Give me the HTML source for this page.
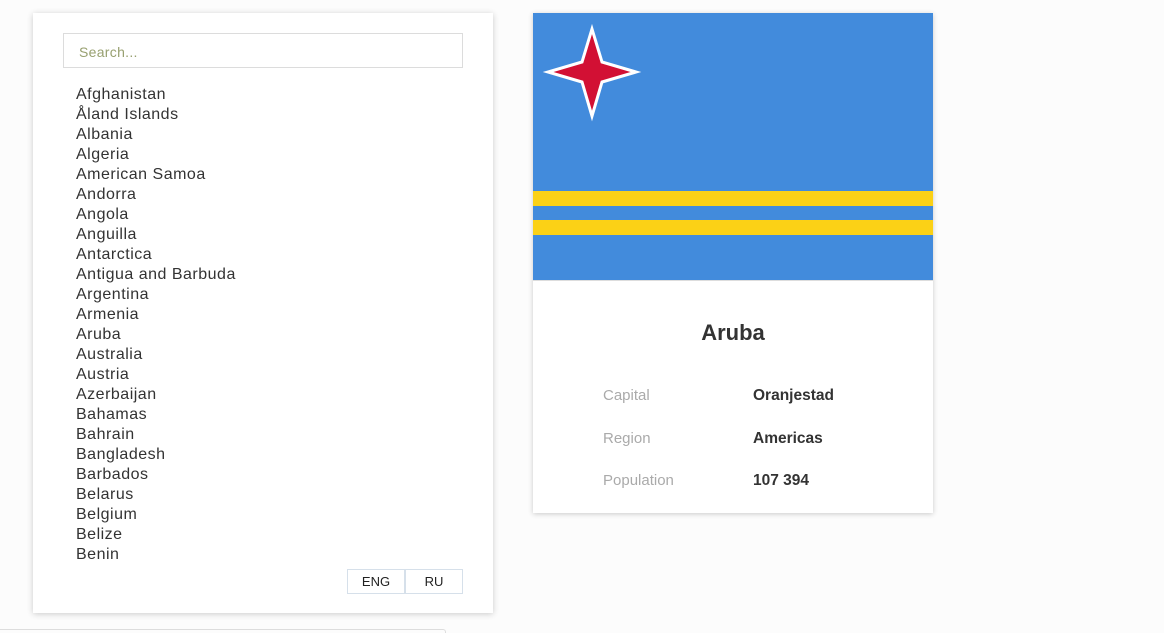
<!DOCTYPE html><html><head><style>
body{margin:0;background:#fcfcfc;font-family:"Liberation Sans",sans-serif;width:1164px;height:633px;overflow:hidden;position:relative}
.l{position:absolute;left:33px;top:13px;width:460px;height:600px;background:#fff;box-shadow:0 1px 6px rgba(0,0,0,.2)}
.s{position:absolute;left:30px;top:20px;width:400px;height:35px;border:1px solid #dcdcdc;box-sizing:border-box;font-size:14px;color:#98a070;padding:10px 15px;letter-spacing:.3px}
ul{list-style:none;margin:0;padding:0;position:absolute;left:43px;top:72px;font-size:16px;line-height:20px;color:#333;letter-spacing:.5px}
.b{position:absolute;top:556px;height:25px;border:1px solid #d6e0ea;box-sizing:border-box;font-size:13px;text-align:center;line-height:23px;color:#222}
.r{position:absolute;left:533px;top:13px;width:400px;height:500px;background:#fff;box-shadow:0 1px 5px rgba(0,0,0,.2)}
.f{position:absolute;left:0;top:0;width:400px;height:267px;background:#428bdc;border-bottom:1px solid #ddd}
.st{position:absolute;left:0;width:400px;height:15px;background:#fbd116}
h2{position:absolute;top:306px;width:400px;text-align:center;margin:0;font-size:22px;color:#333}
.k{position:absolute;left:70px;font-size:15px;color:#aaa}.v{position:absolute;left:220px;font-size:15.5px;color:#333;font-weight:bold}
</style></head><body>
<div class="l"><div class="s">Search...</div>
<ul><li>Afghanistan</li><li>Åland Islands</li><li>Albania</li><li>Algeria</li><li>American Samoa</li><li>Andorra</li><li>Angola</li><li>Anguilla</li><li>Antarctica</li><li>Antigua and Barbuda</li><li>Argentina</li><li>Armenia</li><li>Aruba</li><li>Australia</li><li>Austria</li><li>Azerbaijan</li><li>Bahamas</li><li>Bahrain</li><li>Bangladesh</li><li>Barbados</li><li>Belarus</li><li>Belgium</li><li>Belize</li><li>Benin</li></ul>
<div class="b" style="left:314px;width:58px">ENG</div><div class="b" style="left:372px;width:58px">RU</div></div>
<div style="position:absolute;left:0;top:629px;width:445px;height:3px;border-top:1px solid #ddd;border-right:1px solid #ddd;border-radius:0 3px 0 0"></div>
<div class="r"><div class="f"><div class="st" style="top:178px"></div><div class="st" style="top:207px"></div>
<svg width="400" height="267" style="position:absolute;left:0;top:0"><polygon points="59,16 69,49 103,59 69,69 59,103 49,69 15,59 49,49" fill="#d21034" stroke="#fff" stroke-width="3"/></svg></div>
<h2 style="top:307px">Aruba</h2>
<div class="k" style="top:374px">Capital</div><div class="v" style="top:374px">Oranjestad</div>
<div class="k" style="top:417px">Region</div><div class="v" style="top:417px">Americas</div>
<div class="k" style="top:459px">Population</div><div class="v" style="top:459px">107 394</div></div>
</body></html>
